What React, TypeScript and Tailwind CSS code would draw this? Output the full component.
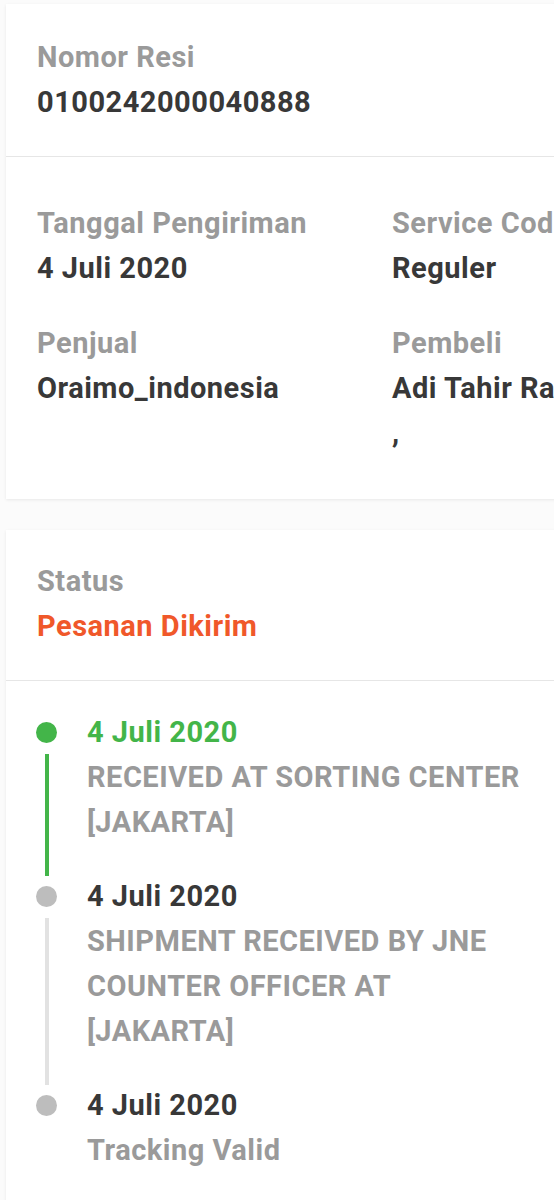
const label = "text-[29px] leading-[45px] font-bold tracking-[0.5px] text-[#9a9a9a]";
const value = "text-[29px] leading-[45px] font-bold tracking-[0.5px] text-[#383838]";

const Field = ({
  title,
  children,
  valueClass = "",
}: {
  title: string;
  children: React.ReactNode;
  valueClass?: string;
}) => (
  <div>
    <p className={label}>{title}</p>
    <p className={`${value} ${valueClass}`}>{children}</p>
  </div>
);

type Step = { date: string; desc: string[]; active?: boolean; last?: boolean };

const steps: Step[] = [
  { date: "4 Juli 2020", desc: ["RECEIVED AT SORTING CENTER", "[JAKARTA]"], active: true },
  { date: "4 Juli 2020", desc: ["SHIPMENT RECEIVED BY JNE", "COUNTER OFFICER AT", "[JAKARTA]"] },
  { date: "4 Juli 2020", desc: ["Tracking Valid"], last: true },
];

const TimelineItem = ({ step }: { step: Step }) => (
  <div className="flex">
    <div className="flex w-[21px] flex-col items-center">
      <span
        className={`mt-[12px] h-[21px] w-[21px] shrink-0 rounded-full ${
          step.active ? "bg-[#43b549]" : "bg-[#bdbdbd]"
        }`}
      />
      {!step.last && (
        <span
          className={`mt-[11px] mb-[-2px] w-[4px] flex-1 ${
            step.active ? "bg-[#43b549]" : "bg-[#e2e2e2]"
          }`}
        />
      )}
    </div>
    <div className={`ml-[30px] w-[450px] ${step.last ? "" : "pb-[29px]"}`}>
      <p
        className={`text-[29px] leading-[45px] font-bold tracking-[0.5px] ${
          step.active ? "text-[#43b549]" : "text-[#383838]"
        }`}
      >
        {step.date}
      </p>
      {step.desc.map((line) => (
        <p key={line} className={label}>
          {line}
        </p>
      ))}
    </div>
  </div>
);

export default function App() {
  return (
    <div
      className="h-[1200px] w-[554px] overflow-hidden bg-[#fbfbfb] pt-[4px]"
      style={{ fontFamily: "Roboto, 'Noto Sans', sans-serif" }}
    >
      <div className="ml-[6px] w-[760px] bg-white shadow-[0_1px_3px_rgba(0,0,0,0.08)]">
        <div className="px-[31px] pt-[31px] pb-[31px]">
          <Field title="Nomor Resi" valueClass="tracking-[-0.5px]">
            0100242000040888
          </Field>
        </div>
        <div className="h-px bg-[#e6e6e6]" />
        <div className="grid grid-cols-[355px_355px] gap-y-[30px] px-[31px] pt-[44px] pb-[43px]">
          <Field title="Tanggal Pengiriman">4 Juli 2020</Field>
          <Field title="Service Code">Reguler</Field>
          <Field title="Penjual">Oraimo_indonesia</Field>
          <Field title="Pembeli">
            Adi Tahir Rahman
            <br />,
          </Field>
        </div>
      </div>

      <div className="mt-[31px] ml-[6px] h-[800px] w-[760px] bg-white shadow-[0_1px_3px_rgba(0,0,0,0.08)]">
        <div className="px-[31px] pt-[29px] pb-[31px]">
          <p className={label}>Status</p>
          <p className="text-[29px] leading-[45px] font-bold tracking-[0.5px] text-[#f0582a]">
            Pesanan Dikirim
          </p>
        </div>
        <div className="h-px bg-[#e6e6e6]" />
        <div className="px-[30px] pt-[29px]">
          {steps.map((s, i) => (
            <TimelineItem key={i} step={s} />
          ))}
        </div>
      </div>
    </div>
  );
}
